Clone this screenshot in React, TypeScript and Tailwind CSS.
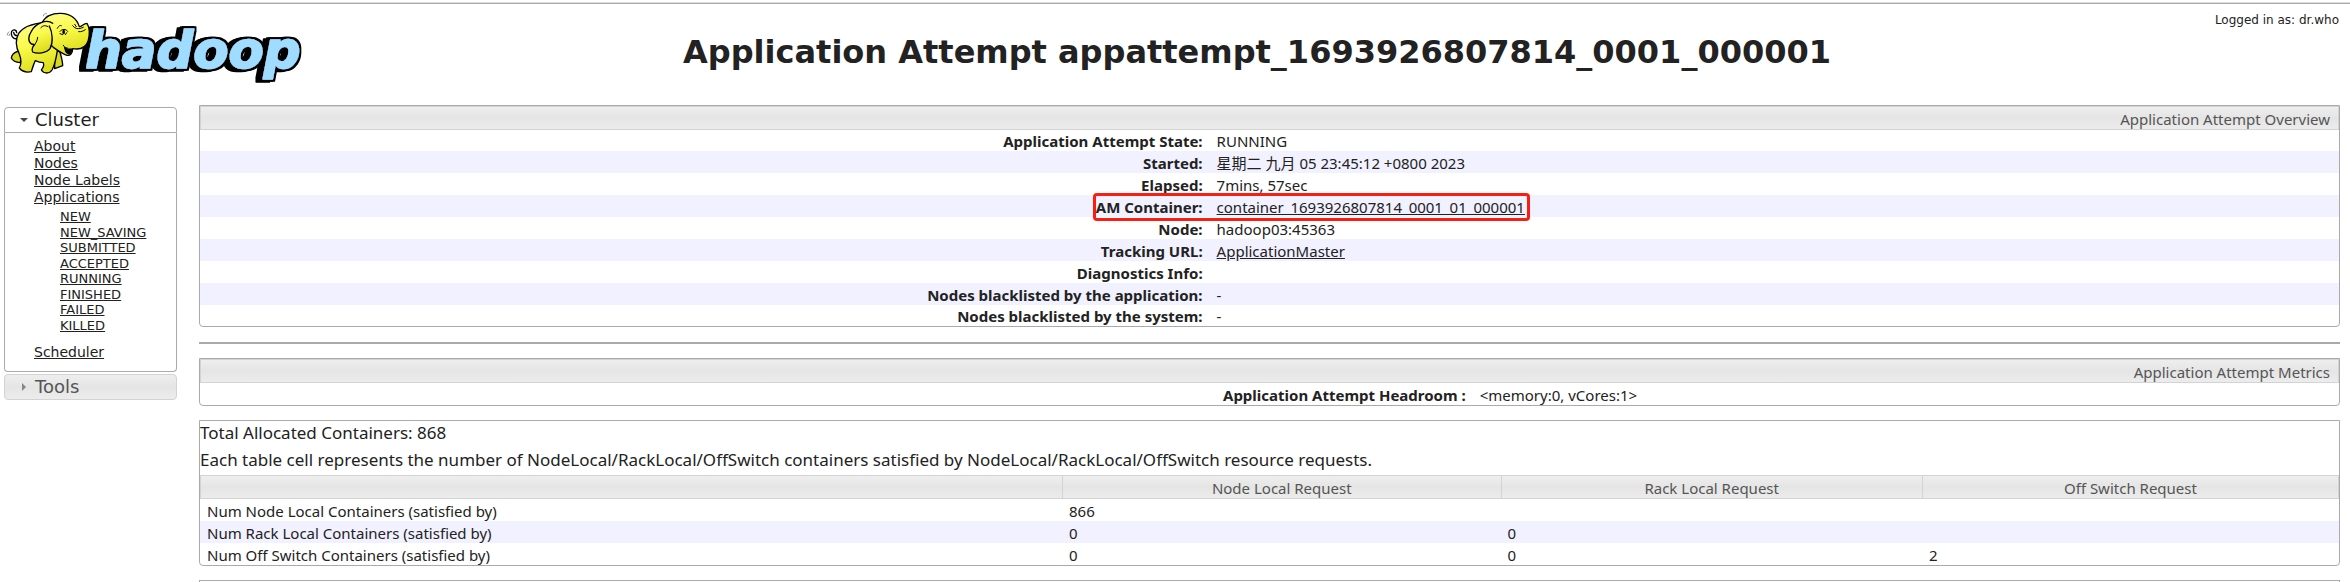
import { useState } from "react";
import type { ReactNode } from "react";

const BAR =
  "border border-[#d3d3d3] bg-linear-to-b from-[#eeeeee] via-[#e5e5e5] to-[#ececec] text-[#555555]";

const states = [
  "NEW",
  "NEW_SAVING",
  "SUBMITTED",
  "ACCEPTED",
  "RUNNING",
  "FINISHED",
  "FAILED",
  "KILLED",
];

function Logo() {
  return (
    <svg viewBox="0 24 930 231" className="h-[77px] w-[310px]" role="img" aria-label="hadoop">
      <defs>
        <linearGradient id="hide" x1="0" y1="0" x2="0.3" y2="1">
          <stop offset="0" stopColor="#fffd90" />
          <stop offset="0.5" stopColor="#fafa4a" />
          <stop offset="1" stopColor="#dede20" />
        </linearGradient>
        <filter id="slab" x="-10%" y="-20%" width="120%" height="140%">
          <feMorphology in="SourceAlpha" operator="dilate" radius="5" result="edge" />
          <feOffset in="edge" dx="-7" dy="1" result="mid" />
          <feOffset in="edge" dx="-14" dy="2" result="far" />
          <feMerge>
            <feMergeNode in="far" />
            <feMergeNode in="mid" />
            <feMergeNode in="edge" />
            <feMergeNode in="SourceGraphic" />
          </feMerge>
        </filter>
      </defs>
      <text
        x="256"
        y="204"
        fontSize="154"
        fill="#a0dcff"
        stroke="#a0dcff"
        strokeWidth="5"
        strokeLinejoin="round"
        filter="url(#slab)"
        className="font-['DejaVu_Sans',sans-serif] font-bold italic"
      >
        hadoop
      </text>
      <g stroke="#000" strokeWidth="4" strokeLinejoin="round" strokeLinecap="round" fill="url(#hide)">
        <path d="M50 117C38 117 31 106 35 94C40 87 50 89 50 98M41 97C42 104 45 107 52 107" fill="none" />
        <path d="M164 150L180 156C184 172 188 184 188 197L164 206Z" fill="#d8d820" />
        <path d="M52 154C42 158 35 164 34 174C38 182 46 187 60 188L72 160Z" fill="#d8d820" />
        <path d="M132 68C108 70 72 78 56 100C46 118 48 142 58 162C64 178 66 190 58 204C66 214 80 218 94 215C98 202 102 190 106 182C114 186 122 188 130 188C134 198 128 204 124 210C132 222 148 222 156 210C164 196 168 178 172 152L190 120Z" />
        <path d="M126 70C134 50 156 39 182 40C210 41 230 54 238 80C246 80 250 70 261 70C270 84 269 106 264 124C258 142 242 150 218 146C218 160 210 168 201 166C188 162 174 152 160 142L130 110Z" />
        <path d="M194 143C202 150 210 147 214 147C216 155 211 163 204 161C198 157 195 151 194 143Z" fill="#000" />
        <path d="M190 136C193 142 196 144 202 144M226 84C232 88 240 86 250 82M236 95C244 96 250 93 256 89" fill="none" strokeWidth="3" />
        <path d="M158 70C140 56 106 70 94 94C86 106 82 124 94 132C100 134 104 132 104 134C98 138 94 150 98 156C112 163 140 159 150 146C160 128 158 98 148 78" />
        <path d="M144 80C134 74 126 78 122 84M104 134C110 126 112 120 113 112" fill="none" strokeWidth="3" />
        <path d="M172 85C176 77 180 75 184 77M180 94C186 86 198 86 203 94M218 77L224 83M224 73L229 80" fill="none" strokeWidth="3" />
        <ellipse cx="191" cy="96" rx="4" ry="7" fill="#000" stroke="none" />
        <path d="M180 101L188 104M200 98L196 104" fill="none" strokeWidth="3" />
      </g>
      <path d="M130 49C130 43 134 41 140 40M137 51L143 45M22 106C22 101 24 97 28 95M27 108L29 102" fill="none" stroke="#555" strokeWidth="2" />
    </svg>
  );
}

function A({ children }: { children: ReactNode }) {
  return (
    <a href="#" className="underline">
      {children}
    </a>
  );
}

function Sidebar() {
  const [open, setOpen] = useState(true);
  return (
    <nav className="w-[173px] shrink-0 pt-0.5 font-['DejaVu_Sans',sans-serif] text-[#212121]">
      <button
        type="button"
        aria-expanded={open}
        onClick={() => setOpen(!open)}
        className="flex h-[26px] w-full items-center gap-[7px] rounded-t border border-[#aaaaaa] pl-[15px] text-lg"
      >
        <svg viewBox="0 0 8 8" className="size-2" aria-hidden="true">
          <path d="M0 2H8L4 6Z" fill="#454545" />
        </svg>
        Cluster
      </button>
      {open && (
        <div className="rounded-b border border-t-0 border-[#aaaaaa] pt-[5px] pb-[10px] pl-[29px] text-sm leading-[17px]">
          <ul>
            <li><A>About</A></li>
            <li><A>Nodes</A></li>
            <li><A>Node Labels</A></li>
            <li>
              <A>Applications</A>
              <ul className="mt-[3px] mb-[11px] grid h-31 auto-rows-fr pl-[26px] text-[13px] leading-[15px]">
                {states.map((s) => (
                  <li key={s}><A>{s}</A></li>
                ))}
              </ul>
            </li>
            <li><A>Scheduler</A></li>
          </ul>
        </div>
      )}
      <button
        type="button"
        className={`mt-0.5 flex h-[26px] w-full items-center gap-[7px] rounded pl-[15px] text-lg ${BAR}`}
      >
        <svg viewBox="0 0 8 8" className="size-2" aria-hidden="true">
          <path d="M2 0V8L6 4Z" fill="#888888" />
        </svg>
        Tools
      </button>
    </nav>
  );
}

const overview: [string, ReactNode][] = [
  ["Application Attempt State:", "RUNNING"],
  ["Started:", "星期二 九月 05 23:45:12 +0800 2023"],
  ["Elapsed:", "7mins, 57sec"],
  [
    "AM Container:",
    <span className="relative inline-block">
      <A>container_1693926807814_0001_01_000001</A>
      <span className="pointer-events-none absolute -top-1 -right-[5px] -bottom-1 -left-[124px] rounded-sm border-3 border-[#fb1d10]" />
    </span>,
  ],
  ["Node:", "hadoop03:45363"],
  ["Tracking URL:", <A>ApplicationMaster</A>],
  ["Diagnostics Info:", ""],
  ["Nodes blacklisted by the application:", "-"],
  ["Nodes blacklisted by the system:", "-"],
];

function InfoTable({
  title,
  rows,
  labelWidth,
}: {
  title: string;
  rows: [string, ReactNode][];
  labelWidth: string;
}) {
  return (
    <div className="rounded-b border border-[#aaaaaa]">
      <table className="w-full table-fixed border-separate border-spacing-0">
        <colgroup>
          <col className={labelWidth} />
          <col />
        </colgroup>
        <thead>
          <tr>
            <th colSpan={2} className={`h-6 px-2 pt-0.5 text-right font-normal ${BAR}`}>
              {title}
            </th>
          </tr>
        </thead>
        <tbody>
          {rows.map(([label, value]) => (
            <tr
              key={label}
              className="h-[22px] first:h-[21px] last:h-[21px] only:h-[22px] even:bg-[#f1f1ff]"
            >
              <th scope="row" className="px-[7px] pt-px text-right">{label}</th>
              <td className="px-[7px] pt-px">{value}</td>
            </tr>
          ))}
        </tbody>
      </table>
    </div>
  );
}

const requests = [
  ["Num Node Local Containers (satisfied by)", "866", "", ""],
  ["Num Rack Local Containers (satisfied by)", "0", "0", ""],
  ["Num Off Switch Containers (satisfied by)", "0", "0", "2"],
];

export default function App() {
  return (
    <div className="mt-0.5 overflow-hidden border-t border-[#dddddd] bg-white font-['Noto_Sans','Noto_Sans_CJK_SC',sans-serif] text-[15px] leading-5 text-[#222222]">
      <header className="flex h-[102px] border-t border-[#aaaaaa]">
        <div className="pt-1">
          <Logo />
        </div>
        <h1 className="flex-1 pt-7 text-center font-['DejaVu_Sans',sans-serif] text-[32px] leading-10 font-bold">
          Application Attempt appattempt_1693926807814_0001_000001
        </h1>
        <div className="w-[146px] pt-1.5 pr-[11px] text-right text-xs leading-5 whitespace-nowrap font-['DejaVu_Sans',sans-serif]">
          Logged in as: dr.who
        </div>
      </header>
      <div className="flex gap-[22px] pr-[10px] pl-1">
        <Sidebar />
        <main className="min-w-0 flex-1">
          <InfoTable title="Application Attempt Overview" rows={overview} labelWidth="w-[47.2%]" />
          <hr className="mt-[15px] mb-[14px] border-t-2 border-[#aaaaaa]" />
          <InfoTable
            title="Application Attempt Metrics"
            rows={[["Application Attempt Headroom :", "<memory:0, vCores:1>"]]}
            labelWidth="w-[59.5%]"
          />
          <section className="mt-[14px] rounded-b border border-[#aaaaaa]">
            <div className="flex flex-col gap-[3px] pb-[3px] text-[17px] leading-6">
              <p>Total Allocated Containers: 868</p>
              <p>
                Each table cell represents the number of NodeLocal/RackLocal/OffSwitch containers
                satisfied by NodeLocal/RackLocal/OffSwitch resource requests.
              </p>
            </div>
            <table className="w-full table-fixed border-separate border-spacing-0">
              <colgroup>
                <col className="w-[40.3%]" />
                <col className="w-[20.5%]" />
                <col className="w-[19.7%]" />
                <col className="w-[19.5%]" />
              </colgroup>
              <thead>
                <tr>
                  {["", "Node Local Request", "Rack Local Request", "Off Switch Request"].map((h) => (
                    <th key={h} className={`h-6 border-r-0 pt-0.5 font-normal last:border-r ${BAR}`}>
                      {h}
                    </th>
                  ))}
                </tr>
              </thead>
              <tbody>
                {requests.map((r) => (
                  <tr key={r[0]} className="h-[22px] even:bg-[#f1f1ff]">
                    {r.map((c, i) => (
                      <td key={i} className="px-[7px] pt-px">{c}</td>
                    ))}
                  </tr>
                ))}
              </tbody>
            </table>
          </section>
          <div className="mt-[14px] h-0.5 border border-b-0 border-[#aaaaaa]" />
        </main>
      </div>
    </div>
  );
}
